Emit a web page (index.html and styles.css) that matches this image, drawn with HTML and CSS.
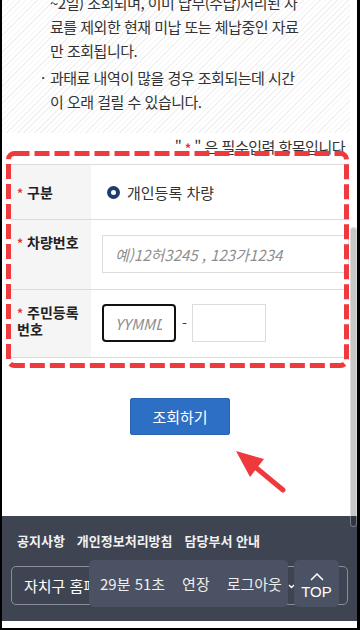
FILE: index.html
```html
<!DOCTYPE html>
<html lang="ko">
<head>
    <meta charset="UTF-8">
    <meta name="viewport" content="width=device-width, initial-scale=1.0">
    <title>과태료 조회</title>
    <link rel="stylesheet" href="styles.css">
</head>
<body>
    <div class="screen">
        <div class="content">
            <div class="notice">
                <ul class="notice-list">
                    <li class="cont">~2일) 조회되며, 이미 납부(수납)처리된 자<br>료를 제외한 현재 미납 또는 체납중인 자료<br>만 조회됩니다.</li>
                    <li>과태료 내역이 많을 경우 조회되는데 시간<br>이 오래 걸릴 수 있습니다.</li>
                </ul>
            </div>

            <p class="req-note">" <span class="star">*</span> " 은 필수입력 항목입니다</p>

            <div class="form-table">
                <div class="row row-type">
                    <div class="label"><span class="star">*</span>구분</div>
                    <div class="field">
                        <label class="radio"><span class="radio-dot"></span>개인등록 차량</label>
                    </div>
                </div>
                <div class="row row-car">
                    <div class="label"><span class="star">*</span>차량번호</div>
                    <div class="field">
                        <input class="input input-car" type="text" placeholder="예)12허3245 , 123가1234">
                    </div>
                </div>
                <div class="row row-jumin">
                    <div class="label"><span class="star">*</span>주민등록<br>번호</div>
                    <div class="field field-jumin">
                        <input class="input input-short focused" type="text" placeholder="YYMMDD">
                        <span class="dash">-</span>
                        <input class="input input-short" type="text">
                    </div>
                </div>
            </div>

            <div class="btn-area">
                <button class="btn-search">조회하기</button>
            </div>
        </div>

        <footer class="footer">
            <div class="footer-links">
                <a href="#">공지사항</a>
                <a href="#">개인정보처리방침</a>
                <a href="#">담당부서 안내</a>
            </div>
            <div class="site-select">
                <span>자치구 홈페이지 바로가기</span>
                <svg class="chevron" width="7" height="5" viewBox="0 0 7 5"><path d="M1 1l2.5 2.5L6 1" fill="none" stroke="#fff" stroke-width="1.4"/></svg>
            </div>

            <div class="session-box">
                <span>29분 51초</span>
                <span>연장</span>
                <span>로그아웃</span>
            </div>
            <a class="btn-top" href="#">
                <svg width="14" height="8" viewBox="0 0 14 8"><path d="M1 7l6-6 6 6" fill="none" stroke="#fff" stroke-width="1.5"/></svg>
                <span>TOP</span>
            </a>
        </footer>

        <!-- annotation overlay -->
        <svg class="annot" width="355" height="628" viewBox="0 0 355 628">
            <rect x="6.5" y="153.5" width="338" height="212" rx="6" fill="none" stroke="#ef3a3d" stroke-width="5" stroke-dasharray="15 5"/>
            <line x1="281" y1="490" x2="255" y2="468.5" stroke="#ef3a3d" stroke-width="5" stroke-linecap="round"/>
            <polygon points="234,451 262,459 248,477" fill="#ef3a3d"/>
        </svg>

        <div class="scroll-thumb"></div>
    </div>
</body>
</html>
```

FILE: styles.css
```css
body {
    margin: 0;
    background: #fff;
}
.screen {
    position: relative;
    width: 355px;
    height: 628px;
    border-left: 2px solid #000;
    border-right: 3px solid #000;
    border-bottom: 2px solid #000;
    overflow: hidden;
    background: #fff;
    font-family: "Noto Sans CJK KR", "Noto Sans", sans-serif;
    color: #333;
}
.content {
    width: 348px;
}
.notice {
    margin-top: -9px;
    background: repeating-linear-gradient(135deg, #fff 0 3px, #f1f1f1 3px 4px);
}
.notice-list {
    margin: 0;
    padding: 0 0 19px 48px;
    list-style: none;
    font-size: 15px;
    line-height: 24px;
    letter-spacing: -0.5px;
    color: #333;
}
.notice-list li {
    position: relative;
}
.notice-list li + li {
    margin-top: 3px;
}
.notice-list li::before {
    content: "·";
    position: absolute;
    left: -9px;
    top: 0;
}
.notice-list li.cont::before {
    content: none;
}
.req-note {
    margin: 0 0 6px;
    padding: 4px 5px 0 0;
    text-align: right;
    font-size: 15px;
    line-height: 20px;
    letter-spacing: -0.5px;
    color: #333;
}
.star {
    color: #e3303a;
    font-size: 12px;
    font-weight: bold;
}
.form-table {
    margin: 0 1px 0 9px;
    border-top: 1px solid #dcdcdc;
    border-bottom: 1px solid #dcdcdc;
}
.row {
    display: grid;
    grid-template-columns: 80px 1fr;
}
.row + .row {
    border-top: 1px solid #dcdcdc;
}
.row-type {
    height: 54px;
}
.row-car {
    height: 69px;
}
.row-jumin {
    height: 67px;
}
.label {
    background: #f5f5f5;
    padding: 14px 4px 0 6px;
    font-size: 14px;
    font-weight: bold;
    line-height: 17px;
    color: #222;
}
.label .star {
    margin-right: 4px;
}
.row-type .label {
    padding-top: 0;
    display: flex;
    align-items: center;
}
.field {
    padding: 15px 0 0 11px;
}
.row-type .field {
    padding-top: 0;
    display: flex;
    align-items: center;
}
.radio {
    display: flex;
    align-items: center;
    margin-left: 5px;
    font-size: 15px;
    color: #333;
}
.radio-dot {
    width: 13px;
    height: 13px;
    border-radius: 50%;
    background: #1e3d6f;
    margin-right: 7px;
    display: flex;
    align-items: center;
    justify-content: center;
}
.radio-dot::after {
    content: "";
    width: 5px;
    height: 5px;
    border-radius: 50%;
    background: #fff;
}
.input {
    box-sizing: border-box;
    height: 38px;
    border: 1px solid #dcdcdc;
    border-radius: 0;
    padding: 0 12px;
    font-family: "Noto Sans CJK KR", "Noto Sans", sans-serif;
    font-size: 15px;
    color: #333;
    background: #fff;
    outline: none;
}
.input::placeholder {
    color: #8e8e8e;
    font-style: italic;
}
.input-car {
    width: 100%;
}
.field-jumin {
    padding-top: 14px;
    display: flex;
    align-items: flex-start;
}
.input-short {
    width: 74px;
}
.input.focused {
    border: 2px solid #111;
    border-radius: 4px;
    padding-left: 11px;
}
.dash {
    line-height: 38px;
    margin: 0 5px 0 6px;
    font-size: 14px;
}
.btn-area {
    padding: 40px 0 81px 8px;
    text-align: center;
}
.btn-search {
    width: 100px;
    height: 37px;
    background: #2e6fc6;
    border: 1px solid #2a63b0;
    border-radius: 2px;
    color: #fff;
    font-family: "Noto Sans CJK KR", "Noto Sans", sans-serif;
    font-size: 15px;
    cursor: pointer;
}
.footer {
    position: relative;
    height: 105px;
    background: #3e4452;
}
.footer-links {
    display: flex;
    gap: 12px;
    padding: 16px 0 0 15px;
    line-height: 18px;
}
.footer-links a {
    color: #f2f2f2;
    font-size: 13px;
    font-weight: bold;
    text-decoration: none;
}
.site-select {
    position: relative;
    box-sizing: border-box;
    width: 337px;
    height: 39px;
    margin: 16px 0 0 9px;
    border: 1px solid #8a8f99;
    border-radius: 5px;
    padding-left: 12px;
    display: flex;
    align-items: center;
    color: #fff;
    font-size: 15px;
    white-space: nowrap;
    overflow: hidden;
}
.chevron {
    position: absolute;
    left: 276px;
    top: 17px;
}
.session-box {
    position: absolute;
    left: 87px;
    top: 44px;
    width: 199px;
    height: 47px;
    box-sizing: border-box;
    padding-left: 11px;
    background: #4b5264;
    border-radius: 5px;
    display: flex;
    align-items: center;
    gap: 17px;
    color: #eee;
    font-size: 15px;
    white-space: nowrap;
}
.btn-top {
    position: absolute;
    left: 292px;
    top: 44px;
    width: 45px;
    height: 47px;
    background: #4b5264;
    border-radius: 5px;
    display: flex;
    flex-direction: column;
    align-items: center;
    padding-top: 13px;
    box-sizing: border-box;
    color: #fff;
    font-family: "Liberation Sans", sans-serif;
    font-size: 15px;
    line-height: 18px;
    text-decoration: none;
}
.btn-top svg {
    margin-bottom: 2px;
}
.annot {
    position: absolute;
    left: 0;
    top: 0;
    pointer-events: none;
}
.scroll-thumb {
    position: absolute;
    left: 348px;
    top: 227px;
    width: 5px;
    height: 298px;
    border-radius: 4px;
    background: rgba(0, 0, 0, 0.22);
    border: 1px solid rgba(255, 255, 255, 0.35);
}
```
